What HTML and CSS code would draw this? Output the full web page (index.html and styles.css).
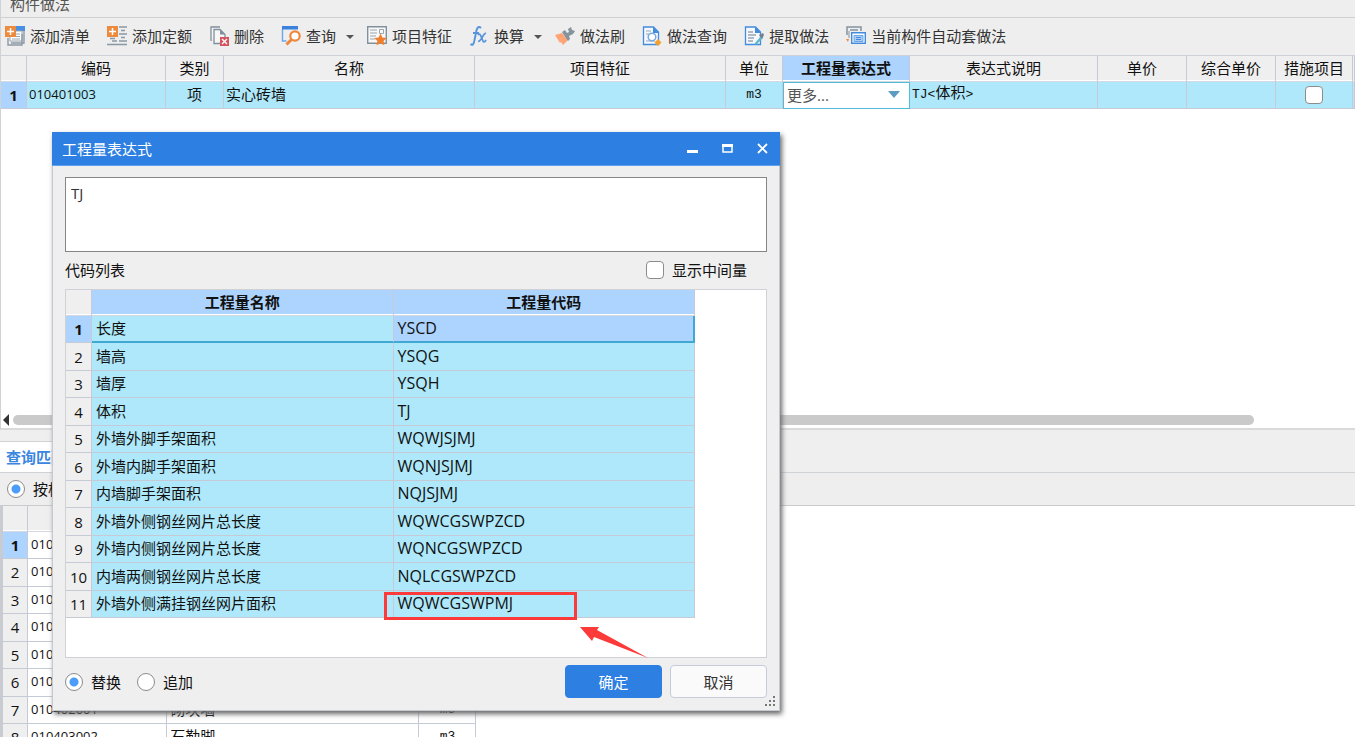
FILE: index.html
```html
<!DOCTYPE html>
<html lang="zh-CN">
<head>
<meta charset="utf-8">
<title>构件做法</title>
<link rel="stylesheet" href="styles.css">
</head>
<body>
<div class="app">
  <section class="pane">
    <h1 class="pane-title">构件做法</h1>
    <div class="toolbar">
      <button class="tool" type="button">
        <svg class="icon" viewBox="0 0 20 20"><path d="M11 0h9v5h-9z" fill="#4a90e2"/><path d="M8 5h9v10H5v-4" fill="#fff" stroke="#9aa5b0"/><path d="M19 5v12H6M17 8v11H3v-7" fill="none" stroke="#8a99a5" stroke-width="1.4"/><path d="M11 8h4M11 10.500h4M7 13h8" stroke="#9aa5b0"/><path d="M0 0h11v11H0z" fill="#ec8b3e"/><path d="M5.500 2v7M2 5.500h7" stroke="#fff" stroke-width="1.500"/></svg>
        <span>添加清单</span></button>
      <button class="tool" type="button">
        <svg class="icon" viewBox="0 0 20 20"><path d="M12 1h8M14 4.500h4M12 8h8M14 11.500h4M12 15h8M5 15h5M0 18.500h20M3 12.500h5" stroke="#8a99a5" stroke-width="1.400"/><path d="M0 0h11v11H0z" fill="#ec8b3e"/><path d="M5.500 2v7M2 5.500h7" stroke="#fff" stroke-width="1.500"/></svg>
        <span>添加定额</span></button>
      <button class="tool" type="button">
        <svg class="icon" viewBox="0 0 20 20"><path d="M2 15V1h9M5 17.500V3.500h6l5 5v9z" fill="#f7f7f7" stroke="#80909c" stroke-width="1.300"/><path d="M11 3.500v5h5z" fill="#80909c"/><path d="M11 11h9v9h-9z" fill="#d5535c"/><path d="m13 13 5 5m0-5-5 5" stroke="#fff" stroke-width="1.300"/></svg>
        <span>删除</span></button>
      <button class="tool tool-drop" type="button">
        <svg class="icon" viewBox="0 0 20 20"><path d="M1.500 3v12h4" fill="none" stroke="#6ea5e4" stroke-width="1.400"/><path d="M1 0h16v3.500H1z" fill="#3c82dc"/><circle cx="14" cy="10" r="4.700" fill="#fff" stroke="#ee873c" stroke-width="2.200"/><path d="m10.500 13.500-5 5" stroke="#ee873c" stroke-width="3"/></svg>
        <span>查询</span><svg class="drop" viewBox="0 0 8 4"><path d="M0 0h8L4 4z"/></svg></button>
      <button class="tool" type="button">
        <svg class="icon" viewBox="0 0 20 20"><path d="M.7.700h18.600v16.600H.7z" fill="#f8f8f8" stroke="#80909c" stroke-width="1.400"/><path d="M3 4h7M3 7h7M3 10h6M3 13h5" stroke="#98a5ae"/><path d="M12.500 3.500h4v4h-4z" fill="none" stroke="#98a5ae"/><path d="m13.500 7.500 1.900 3.900 4.300.600-3.100 3 .7 4.300-3.800-2-3.900 2 .8-4.300-3.100-3 4.300-.6z" fill="#f07f2d"/></svg>
        <span>项目特征</span></button>
      <button class="tool tool-drop" type="button">
        <svg class="icon" viewBox="0 0 20 20"><path d="M12 2C9-1 7.500 3 7 7L5.500 14C5 18 3.500 20 1.500 18M4 7h6" fill="none" stroke="#5794dc" stroke-width="1.900"/><path d="M9 9c3-4 4 7 6 7 1 0 1.500-1 2-2M17 7.500c-3-1-4 8-8 8" fill="none" stroke="#5794dc" stroke-width="1.700"/></svg>
        <span>换算</span><svg class="drop" viewBox="0 0 8 4"><path d="M0 0h8L4 4z"/></svg></button>
      <button class="tool" type="button">
        <svg class="icon" viewBox="0 0 20 20"><path d="m0 9 7-2 6 7-5 5-2-3-1 1z" fill="#ffa477"/><path d="m7 6 3-2 2 3 2-1-1-3 3-2 1 3 3 1-2 3-4 2 1 3-2 2z" fill="#84939d"/></svg>
        <span>做法刷</span></button>
      <button class="tool" type="button">
        <svg class="icon" viewBox="0 0 20 20"><path d="M1.500 1h10l5 5v12.500h-15z" fill="#f5f9ff" stroke="#438bdc" stroke-width="1.300"/><path d="M11 1v6h6z" fill="#438bdc"/><path d="M4 5h5M4 8h3M4 15h9" stroke="#9aa5b0"/><circle cx="10" cy="11" r="3.800" fill="#fff" stroke="#77a9e2" stroke-width="1.500"/><path d="m16 13 3.500 3.500L16 20l-3.500-3.500z" fill="#f6a02c"/></svg>
        <span>做法查询</span></button>
      <button class="tool" type="button">
        <svg class="icon" viewBox="0 0 20 20"><path d="M1.500 1h10l5 5v12.500h-15z" fill="#f5f9ff" stroke="#438bdc" stroke-width="1.300"/><path d="M11 1v6h6z" fill="#438bdc"/><path d="M4 6h5M4 9h8M4 12h6M4 15h5" stroke="#9aa5b0" stroke-width="1.300"/><path d="m11 17 6-7 2 2-6 6-3 1z" fill="#60b7c8"/><path d="m15 9 4-2 1 2-2 4z" fill="#75828c"/></svg>
        <span>提取做法</span></button>
      <button class="tool" type="button">
        <svg class="icon" viewBox="0 0 20 20"><path d="M1 9V1h14v4M4 4h8" fill="none" stroke="#8494a0" stroke-width="1.500"/><path d="M3 5v7" stroke="#8494a0"/><path d="m0 13 3 0-1 3z" fill="#ef8a3b"/><path d="M5.700 6.700h13.600v10.600H5.700z" fill="#fff" stroke="#438bdc" stroke-width="1.400"/><path d="M8 9.500h9v6H8z" fill="#a9cdf4" stroke="#6ba6e8"/><path d="M10 11.500h5M10 13.500h5" stroke="#438bdc"/></svg>
        <span>当前构件自动套做法</span></button>
    </div>
    <table class="grid">
      <colgroup><col class="w-num-main"><col class="w-code"><col class="w-kind"><col class="w-name"><col class="w-name"><col class="w-unit"><col class="w-expr"><col class="w-desc"><col class="w-price"><col class="w-price"><col class="w-measure"><col></colgroup>
      <thead><tr><th></th><th>编码</th><th>类别</th><th>名称</th><th>项目特征</th><th>单位</th><th class="current">工程量表达式</th><th>表达式说明</th><th>单价</th><th>综合单价</th><th>措施项目</th><th></th></tr></thead>
      <tbody><tr class="tinted"><th class="current" scope="row">1</th><td class="digits">010401003</td><td class="center">项</td><td>实心砖墙</td><td></td><td class="mono center">m3</td>
        <td class="editor"><div class="combo"><select aria-label="工程量表达式"><option>更多...</option></select><svg class="combo-arrow" viewBox="0 0 12 7"><path d="M0 0h12L6 7z"/></svg></div></td>
        <td class="mono">TJ&lt;<span class="han">体积</span>&gt;</td><td></td><td></td><td class="center"><input class="check" type="checkbox" aria-label="措施项目"></td><td></td></tr></tbody>
    </table>
    <div class="scroll">
      <svg class="scroll-arrow" viewBox="0 0 6 12"><path d="M6 0v12L0 6z"/></svg>
      <div class="scroll-thumb"></div>
    </div>
  </section>

  <section class="lower">
    <div class="tabs"><button class="tab" type="button">查询匹配</button></div>
    <div class="filter"><label class="option"><input class="radio" type="radio" name="filter" checked>按构件</label></div>
    <table class="grid matches">
      <colgroup><col class="w-num-match"><col class="w-code"><col class="w-name"><col class="w-unit"></colgroup>
      <thead><tr><th></th><th></th><th></th><th></th></tr></thead>
      <tbody>
        <tr><th class="current" scope="row">1</th><td class="digits">010401</td><td></td><td></td></tr>
        <tr><th scope="row">2</th><td class="digits">010401</td><td></td><td></td></tr>
        <tr><th scope="row">3</th><td class="digits">010401</td><td></td><td></td></tr>
        <tr><th scope="row">4</th><td class="digits">010401</td><td></td><td></td></tr>
        <tr><th scope="row">5</th><td class="digits">010401</td><td></td><td></td></tr>
        <tr><th scope="row">6</th><td class="digits">010401</td><td></td><td></td></tr>
        <tr><th scope="row">7</th><td class="digits">010402001</td><td>砌块墙</td><td class="mono center">m3</td></tr>
        <tr><th scope="row">8</th><td class="digits">010403002</td><td>石勒脚</td><td class="mono center">m3</td></tr>
      </tbody>
    </table>
  </section>
</div>

<div class="dialog" role="dialog" aria-labelledby="dialog-title">
  <header class="dialog-bar">
    <h2 class="dialog-title" id="dialog-title">工程量表达式</h2>
    <button class="win" type="button" aria-label="最小化"><svg viewBox="0 0 11 11"><path d="M0 7h11v3H0z" fill="#fff"/></svg></button>
    <button class="win" type="button" aria-label="最大化"><svg viewBox="0 0 11 11"><path d="M1 2.500h9v6.500H1z" fill="none" stroke="#fff" stroke-width="1.500"/><path d="M0 1h11v3H0z" fill="#fff"/></svg></button>
    <button class="win" type="button" aria-label="关闭"><svg viewBox="0 0 11 11"><path d="m1 1 9 9m0-9-9 9" stroke="#fff" stroke-width="1.800"/></svg></button>
  </header>
  <div class="dialog-body">
    <textarea class="expression" aria-label="表达式">TJ</textarea>
    <div class="list-head"><span>代码列表</span><label class="option"><input class="check" type="checkbox">显示中间量</label></div>
    <div class="list">
      <table class="grid codes">
        <colgroup><col class="w-num-main"><col class="w-half"><col class="w-half"></colgroup>
        <thead><tr><th></th><th class="current">工程量名称</th><th class="current">工程量代码</th></tr></thead>
        <tbody>
          <tr class="tinted chosen"><th class="current" scope="row">1</th><td>长度</td><td class="code current-cell">YSCD</td></tr>
          <tr class="tinted"><th scope="row">2</th><td>墙高</td><td class="code">YSQG</td></tr>
          <tr class="tinted"><th scope="row">3</th><td>墙厚</td><td class="code">YSQH</td></tr>
          <tr class="tinted"><th scope="row">4</th><td>体积</td><td class="code">TJ</td></tr>
          <tr class="tinted"><th scope="row">5</th><td>外墙外脚手架面积</td><td class="code">WQWJSJMJ</td></tr>
          <tr class="tinted"><th scope="row">6</th><td>外墙内脚手架面积</td><td class="code">WQNJSJMJ</td></tr>
          <tr class="tinted"><th scope="row">7</th><td>内墙脚手架面积</td><td class="code">NQJSJMJ</td></tr>
          <tr class="tinted"><th scope="row">8</th><td>外墙外侧钢丝网片总长度</td><td class="code">WQWCGSWPZCD</td></tr>
          <tr class="tinted"><th scope="row">9</th><td>外墙内侧钢丝网片总长度</td><td class="code">WQNCGSWPZCD</td></tr>
          <tr class="tinted"><th scope="row">10</th><td>内墙两侧钢丝网片总长度</td><td class="code">NQLCGSWPZCD</td></tr>
          <tr class="tinted"><th scope="row">11</th><td>外墙外侧满挂钢丝网片面积</td><td class="code">WQWCGSWPMJ</td></tr>
        </tbody>
      </table>
    </div>
    <footer class="dialog-foot">
      <label class="option"><input class="radio" type="radio" name="mode" checked>替换</label>
      <label class="option"><input class="radio" type="radio" name="mode">追加</label>
      <span class="spacer"></span>
      <button class="btn btn-primary" type="button">确定</button>
      <button class="btn" type="button">取消</button>
    </footer>
  </div>
  <svg class="grip" viewBox="0 0 11 11"><path d="M8 0h2v2H8zM4 4h2v2H4zM8 4h2v2H8zM0 8h2v2H0zM4 8h2v2H4zM8 8h2v2H8z"/></svg>
  <div class="mark"></div>
  <svg class="arrow" viewBox="0 0 68 31"><path d="M0 0h19l-2 3 51 28-54-21-2 4z"/></svg>
</div>
</body>
</html>
```
FILE: styles.css
```css
* { box-sizing: border-box; }

body {
  margin: 0;
  font-family: "Open Sans", "Noto Sans CJK SC", sans-serif;
  font-size: 15px;
  line-height: 20px;
  color: #111;
  background: #fff;
}

button, select, textarea, input { font: inherit; color: inherit; margin: 0; }
h1, h2 { margin: 0; font-size: 15px; font-weight: 400; }

.app {
  display: grid;
  grid-template-rows: 7fr 5fr;
  height: 100vh;
  overflow: hidden;
}

.pane {
  display: flex;
  flex-direction: column;
  min-height: 0;
  border-left: 1px solid #d0d3d6;
  border-bottom: 2px solid #dadada;
}

.pane-title {
  display: flex;
  align-items: flex-end;
  height: 18px;
  padding: 0 9px 3px;
  color: #555;
  background: #eee;
  border-bottom: 1px solid #d0d0d0;
}

.toolbar {
  display: flex;
  align-items: center;
  gap: 13px;
  height: 38px;
  padding: 0 4px 2px;
  background: #eee;
  border-bottom: 1px solid #cdd0d6;
}

.tool {
  display: flex;
  align-items: center;
  gap: 5px;
  padding: 0 4px 0 0;
  color: #333;
  background: none;
  border: 0;
  white-space: nowrap;
}
.tool-drop { padding: 0; }
.icon { width: 20px; height: 20px; }
.drop { width: 8px; height: 4px; margin: 2px 0 0 5px; fill: #555; }

.grid {
  width: 100%;
  table-layout: fixed;
  border-collapse: separate;
  border-spacing: 0;
}
.grid th, .grid td {
  height: 27px;
  padding: 0 2px;
  border-right: 1px solid #c5cad6;
  border-bottom: 1px solid #c5cad6;
  white-space: nowrap;
  overflow: hidden;
}
.grid th { font-weight: 400; background: #efefef; }
.grid td { padding-bottom: 2px; text-align: left; }
.grid thead th {
  height: 26px;
  padding-bottom: 2px;
  border-bottom-color: #d5d8de;
  box-shadow: inset 0 -1px #fff;
}
.grid .current { font-weight: 700; background: #acd4ff; }
.grid .center { text-align: center; }
.grid .mono {
  padding-bottom: 0;
  font-family: "Liberation Mono", "Noto Sans CJK SC", monospace;
  font-size: 13px;
}
.grid .digits { font-size: 13px; }
.grid .code { font-size: 16px; }
.han { font-size: 15px; }
.tinted td { background: #aee8fa; }

.w-num-main { width: 26px; }
.w-num-match { width: 25px; }
.w-code { width: 139px; }
.w-kind { width: 58px; }
.w-unit { width: 57px; }
.w-name { width: 251px; }
.w-expr { width: 127px; }
.w-desc { width: 188px; }
.w-price { width: 89px; }
.w-measure { width: 77px; }

.grid .editor { padding: 0; border: 0; }
.combo {
  display: flex;
  align-items: center;
  height: 27px;
  padding: 0 9px 2px 0;
  background: #fff;
  border: 1px solid #56badb;
}
.combo select {
  flex: 1;
  min-width: 0;
  padding: 0 3px;
  color: #555;
  background: none;
  border: 0;
  appearance: none;
}
.combo-arrow { width: 12px; height: 7px; fill: #5b9cc5; }

.check, .radio {
  appearance: none;
  flex: none;
  width: 18px;
  height: 18px;
  background: #fff;
  border: 1px solid #8c8c8c;
  border-radius: 4px;
  vertical-align: middle;
}
.radio { border-radius: 50%; }
.radio:checked { background: radial-gradient(circle, #4c9dfa 4px, #fff 5px); }
.option { display: flex; align-items: center; gap: 8px; white-space: nowrap; }

.scroll {
  display: flex;
  align-items: center;
  gap: 4px;
  height: 16px;
  margin-top: auto;
  padding: 0 101px 0 2px;
}
.scroll-arrow { width: 6px; height: 12px; fill: #333; }
.scroll-thumb { flex: 1; height: 10px; border-radius: 5px; background: #cacaca; }

.lower { min-height: 0; overflow: hidden; }
.tabs {
  display: flex;
  height: 43px;
  padding-top: 11px;
  background: #efefef;
  border-bottom: 1px solid #d0d3d6;
}
.tab {
  padding: 0 6px;
  color: #3a86e0;
  font-weight: 700;
  background: #fff;
  border: 1px solid #d0d3d6;
  border-width: 1px 1px 0 0;
}
.filter {
  display: flex;
  align-items: center;
  height: 33px;
  padding-left: 7px;
  background: #eee;
  border-bottom: 1px solid #c8cacd;
}
.grid.matches { width: 476px; border-left: 3px solid #c8cbd0; }

/* Rows alternate 28px and 27px */
.matches tbody tr:nth-child(even) > *, .codes tbody tr:nth-child(even) > * { height: 28px; }
.matches tbody td { padding-left: 3px; }

.dialog {
  position: absolute;
  left: 52px;
  top: 132px;
  width: 728px;
  background: #efefef;
  border: 1px solid #c5c9d3;
  border-top: 0;
  box-shadow: 2px 3px 5px #666;
}
.dialog-bar {
  display: flex;
  align-items: center;
  gap: 24px;
  height: 34px;
  margin: 0 -1px;
  padding: 0 12px 0 10px;
  color: #fff;
  background: #2d7fe1;
  border-bottom: 1px solid #60a0ec;
}
.dialog-title { flex: 1; }
.win { display: flex; padding: 0; background: none; border: 0; }
.win svg { width: 11px; height: 11px; }

.dialog-body { padding: 11px 12px 12px; }
.expression {
  display: block;
  width: 100%;
  height: 75px;
  padding: 5px;
  color: #333;
  background: #fff;
  border: 1px solid #858585;
  resize: none;
}
.list-head {
  display: flex;
  align-items: center;
  justify-content: space-between;
  height: 37px;
  padding: 0 20px 2px 0;
}
.list {
  padding: 0 71px 39px 0;
  background: #fff;
  border: 1px solid #cfd1d6;
}
.grid.codes td { padding-left: 4px; }
.grid .current-cell { background: #acd4ff; border-right: 2px solid #3fa9d3; }
.grid .chosen td { border-bottom: 2px solid #3fa9d3; }

.dialog-foot {
  display: flex;
  align-items: center;
  gap: 8px;
  padding-top: 7px;
}
.dialog-foot .option + .option { margin-left: 8px; }
.spacer { flex: 1; }
.btn {
  width: 97px;
  height: 33px;
  color: #333;
  background: #fafafa;
  border: 1px solid #c5cbdd;
  border-radius: 4px;
}
.btn-primary { color: #fff; background: #2d7fe1; border-color: #2d7fe1; }

.grip { position: absolute; right: 3px; bottom: 3px; width: 11px; height: 11px; fill: #777; }
.mark {
  position: absolute;
  left: 331px;
  top: 460px;
  width: 193px;
  height: 28px;
  border: 3px solid #fc3a3a;
}
.arrow { position: absolute; left: 527px; top: 495px; width: 68px; height: 31px; fill: #fc3a3a; }
```
